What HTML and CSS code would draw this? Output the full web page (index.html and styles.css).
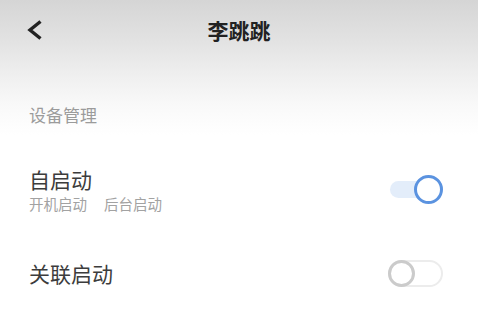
FILE: index.html
```html
<!DOCTYPE html>
<html lang="zh">
<head>
<meta charset="utf-8">
<title>李跳跳</title>
<link rel="stylesheet" href="styles.css">
</head>
<body>
<div class="page">
  <header class="topbar">
    <span class="back">
      <svg width="16" height="22" viewBox="0 0 16 22"><polyline points="13.5,2.5 3,11 13.5,19.5" fill="none" stroke="#222" stroke-width="3.4" stroke-linejoin="miter"/></svg>
    </span>
    <h1 class="title">李跳跳</h1>
  </header>
  <div class="section-label">设备管理</div>
  <div class="row row-first">
    <div class="row-text">
      <div class="row-title">自启动</div>
      <div class="row-sub"><span>开机启动</span><span>后台启动</span></div>
    </div>
    <div class="switch on"><span class="knob"></span></div>
  </div>
  <div class="row row-second">
    <div class="row-text">
      <div class="row-title">关联启动</div>
    </div>
    <div class="switch off"><span class="knob"></span></div>
  </div>
</div>
</body>
</html>
```
FILE: styles.css
```css
html, body {
  margin: 0;
  padding: 0;
}
body {
  width: 478px;
  height: 329px;
  overflow: hidden;
  font-family: "Noto Sans CJK SC", "Noto Sans", sans-serif;
  background: #fff;
}
.page {
  height: 329px;
  background: linear-gradient(#d5d5d5 0px, #e2e2e2 40px, #efefef 75px, #f9f9f9 105px, #ffffff 135px);
  display: flex;
  flex-direction: column;
}
.topbar {
  height: 60px;
  display: flex;
  align-items: center;
  position: relative;
  padding: 0 27px;
}
.back {
  display: flex;
  width: 16px;
  height: 22px;
}
.title {
  margin: 0;
  position: absolute;
  left: 0;
  right: 0;
  text-align: center;
  font-size: 21px;
  font-weight: 700;
  color: #222;
  line-height: 28px;
  top: 16px;
  pointer-events: none;
}
.section-label {
  margin-top: 43px;
  padding-left: 29px;
  font-size: 17px;
  line-height: 24px;
  color: #9b9b9b;
}
.row {
  display: flex;
  align-items: center;
  justify-content: space-between;
  padding: 0 35px 0 29px;
}
.row-first {
  margin-top: 38px;
}
.row-second {
  margin-top: 45px;
}
.row-title {
  font-size: 21px;
  line-height: 28px;
  color: #3c3c3c;
}
.row-sub {
  margin-top: 1px;
  font-size: 14.5px;
  line-height: 20px;
  color: #a2a2a2;
  display: flex;
  gap: 17px;
}
.switch {
  position: relative;
  box-sizing: border-box;
  display: flex;
  align-items: center;
}
.switch.on {
  width: 53px;
  height: 28px;
  margin-top: -1px;
}
.switch.on::before {
  content: "";
  position: absolute;
  left: 0;
  right: 6px;
  top: 6px;
  height: 17px;
  border-radius: 9px;
  background: #e3edfa;
}
.switch.on .knob {
  position: absolute;
  right: 0;
  top: 0;
  width: 29px;
  height: 29px;
  box-sizing: border-box;
  border-radius: 50%;
  border: 3.5px solid #5b93e0;
  background: #fff;
}
.switch.off {
  width: 55px;
  height: 27px;
  border: 2px solid #ececec;
  border-radius: 14px;
  background: #fff;
}
.switch.off .knob {
  position: absolute;
  left: -2px;
  top: -2px;
  width: 27px;
  height: 27px;
  box-sizing: border-box;
  border-radius: 50%;
  border: 3px solid #cbcbcb;
  background: #fff;
}
```
